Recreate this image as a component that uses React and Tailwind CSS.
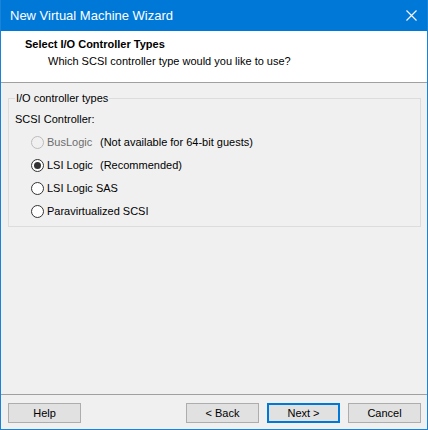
const FONT = { fontFamily: '"Liberation Sans", Arial, sans-serif' };

function Radio({ checked, disabled, label, note }) {
  return (
    <div className="flex items-center h-[23px]">
      <span
        className={`w-[13px] h-[13px] rounded-full border flex items-center justify-center ${
          disabled ? "border-[#bcbcbc] bg-[#f0f0f0]" : "border-[#333333] bg-white"
        }`}
      >
        {checked && <span className="w-[7px] h-[7px] rounded-full bg-[#333333]" />}
      </span>
      <span className={`ml-[3px] w-[53px] whitespace-nowrap ${disabled ? "text-[#6d6d6d]" : "text-black"}`}>
        {label}
      </span>
      {note && <span className="whitespace-nowrap">{note}</span>}
    </div>
  );
}

function Btn({ children, primary }) {
  return (
    <button
      className={`w-[73px] h-[20px] bg-[#e1e1e1] text-[11px] text-black flex items-center justify-center ${
        primary ? "border-2 border-[#0078d7]" : "border border-[#adadad]"
      }`}
    >
      {children}
    </button>
  );
}

export default function App() {
  return (
    <div
      className="w-[428px] h-[430px] flex flex-col bg-[#f0f0f0] border-x border-b border-[#1883d7] text-[11px] text-black"
      style={FONT}
    >
      {/* title bar */}
      <div className="h-[31px] bg-[#0078d7] flex items-center justify-between pl-[9px] pr-[9px] text-white text-[13px]">
        <span>New Virtual Machine Wizard</span>
        <svg width="11" height="11" viewBox="0 0 11 11" className="mr-[1px]">
          <path d="M0.5 0.5 L10.5 10.5 M10.5 0.5 L0.5 10.5" stroke="white" strokeWidth="1.1" fill="none" />
        </svg>
      </div>

      {/* header */}
      <div className="h-[52px] bg-white border-b border-[#a0a0a0] pl-[24px] pt-[6px]">
        <div className="font-bold leading-[15px]">Select I/O Controller Types</div>
        <div className="pl-[23px] mt-[2px] leading-[15px]">Which SCSI controller type would you like to use?</div>
      </div>

      {/* body */}
      <div className="flex-1 pl-[7px] pr-[6px] pt-[8px]">
        <fieldset className="border border-[#dcdcdc] h-[136px] px-[6px]">
          <legend className="px-[1px] leading-[14px]">I/O controller types</legend>
          <div className="mt-[7px] leading-[14px]">SCSI Controller:</div>
          <div className="mt-[5px] pl-[16px]">
            <Radio disabled label="BusLogic" note="(Not available for 64-bit guests)" />
            <Radio checked label="LSI Logic" note="(Recommended)" />
            <Radio label="LSI Logic SAS" />
            <Radio label="Paravirtualized SCSI" />
          </div>
        </fieldset>
      </div>

      {/* footer */}
      <div className="h-[35px] border-t border-[#a0a0a0] pt-[8px] pl-[7px] pr-[6px] flex">
        <Btn>Help</Btn>
        <div className="flex-1" />
        <div className="flex gap-[8px]">
          <Btn>&lt; Back</Btn>
          <Btn primary>Next &gt;</Btn>
          <Btn>Cancel</Btn>
        </div>
      </div>
    </div>
  );
}
